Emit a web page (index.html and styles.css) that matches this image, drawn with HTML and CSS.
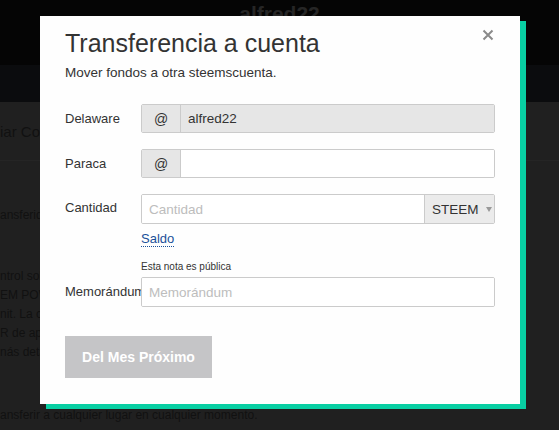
FILE: index.html
```html
<!DOCTYPE html>
<html lang="es">
<head>
    <meta charset="UTF-8">
    <meta name="viewport" content="width=device-width, initial-scale=1.0">
    <title>Transferencia a cuenta</title>
    <link rel="stylesheet" href="styles.css">
</head>
<body>

    <header class="topbar">
        <div class="username">alfred22</div>
    </header>
    <div class="subbar"></div>

    <main class="wallet">
        <div class="wallet-head"><span class="clip">iar Co</span></div>
        <p class="line first clip">ansferido</p>
        <div class="para">
            <p class="line clip">ntrol sob</p>
            <p class="line clip">EM POW</p>
            <p class="line clip">nit. La c</p>
            <p class="line clip">R de apr</p>
            <p class="line clip">nás deta</p>
        </div>
        <p class="line last">ansferir a cualquier lugar en cualquier momento.</p>
    </main>

    <div class="modal">
        <button class="close" type="button" aria-label="Cerrar">
            <svg width="12" height="12" viewBox="0 0 12 12">
                <path d="M1.5 1.5 L10.5 10.5 M10.5 1.5 L1.5 10.5" stroke="#8a8a8a" stroke-width="2" fill="none"/>
            </svg>
        </button>
        <h1>Transferencia a cuenta</h1>
        <p class="subtitle">Mover fondos a otra steemscuenta.</p>

        <form class="transfer-form">
            <div class="row">
                <label>Delaware</label>
                <div class="field">
                    <span class="addon">@</span>
                    <input type="text" value="alfred22" disabled>
                </div>
            </div>
            <div class="row">
                <label>Paraca</label>
                <div class="field">
                    <span class="addon">@</span>
                    <input type="text">
                </div>
            </div>
            <div class="row amount">
                <label>Cantidad</label>
                <div class="stack">
                    <div class="field tall">
                        <input type="text" placeholder="Cantidad">
                        <span class="asset">STEEM <span class="caret"></span></span>
                    </div>
                    <a href="#" class="balance">Saldo</a>
                </div>
            </div>
            <div class="row memo">
                <label><span class="memo-label">Memorándum</span></label>
                <div class="stack">
                    <small class="hint">Esta nota es pública</small>
                    <div class="field tall">
                        <input type="text" placeholder="Memorándum">
                    </div>
                </div>
            </div>
            <button type="submit" class="submit" disabled>Del Mes Próximo</button>
        </form>
    </div>

</body>
</html>
```

FILE: styles.css
```css
body {
    font-family: "Liberation Sans", Arial, sans-serif;
    background-color: #202020;
    color: #333;
    margin: 0;
    padding: 0;
    height: 430px;
    overflow: hidden;
}

.topbar {
    background-color: #050505;
    height: 65px;
    text-align: center;
}

.username {
    font-size: 21px;
    font-weight: bold;
    color: #262626;
    padding-top: 2px;
}

.subbar {
    background-color: #0b0c0e;
    height: 37px;
}

.wallet {
    color: #111;
}

.clip {
    display: block;
    width: 40px;
    overflow: hidden;
    white-space: nowrap;
}

.wallet-head {
    font-size: 15px;
    padding: 21px 0 20px;
    border-bottom: 1px solid #252525;
}

.line {
    margin: 0;
    font-size: 12px;
    line-height: 19px;
    white-space: nowrap;
}

.line.first {
    margin-top: 45px;
}

.para {
    margin-top: 42px;
}

.line.last {
    margin-top: 44px;
}

.modal {
    position: absolute;
    left: 40px;
    top: 16px;
    width: 480px;
    height: 388px;
    box-sizing: border-box;
    background: #fefefe;
    box-shadow: 6px 5px 0 #08cfa3;
    padding: 12px 25px 0;
}

.close {
    position: absolute;
    right: 26px;
    top: 13px;
    background: none;
    border: none;
    padding: 0;
    cursor: pointer;
}

.modal h1 {
    font-size: 25px;
    font-weight: normal;
    line-height: 30px;
    margin: 0;
    color: #333;
}

.subtitle {
    font-size: 13.5px;
    line-height: 20px;
    margin: 5px 0 0;
}

.transfer-form {
    margin-top: 21px;
}

.row {
    display: flex;
    align-items: center;
    margin-bottom: 16px;
}

.row label {
    width: 76px;
    flex: none;
    font-size: 13px;
    white-space: nowrap;
}

.row.amount,
.row.memo {
    align-items: flex-start;
}

.row.amount label {
    padding-top: 6px;
}

.row.memo label {
    padding-top: 23px;
}

.memo-label {
    display: block;
    width: 76px;
    overflow: hidden;
}

.stack {
    flex: 1;
    display: flex;
    flex-direction: column;
}

.field {
    flex: 1;
    display: flex;
    height: 29px;
    box-sizing: border-box;
    border: 1px solid #cbcbcb;
    border-radius: 2px;
    background: #fff;
    overflow: hidden;
}

.stack .field {
    flex: none;
}

.field.tall {
    height: 30px;
}

.addon {
    width: 38px;
    flex: none;
    display: flex;
    align-items: center;
    justify-content: center;
    background: #e6e6e6;
    border-right: 1px solid #cbcbcb;
    font-size: 14px;
}

.field input {
    flex: 1;
    min-width: 0;
    border: none;
    outline: none;
    padding: 0 7px;
    font-family: inherit;
    font-size: 13.5px;
    color: #333;
    background: #fff;
}

.field input:disabled {
    background: #e6e6e6;
    color: #333;
}

.field input::placeholder {
    color: #bdbdbd;
}

.asset {
    flex: none;
    width: 70px;
    box-sizing: border-box;
    display: flex;
    align-items: center;
    padding-left: 7px;
    gap: 7px;
    background: #ebebeb;
    border-left: 1px solid #cbcbcb;
    font-size: 13.5px;
}

.caret {
    width: 0;
    height: 0;
    border-left: 3.5px solid transparent;
    border-right: 3.5px solid transparent;
    border-top: 5px solid #999;
}

.balance {
    align-self: flex-start;
    margin-top: 7px;
    font-size: 13px;
    color: #1a5099;
    text-decoration: none;
    border-bottom: 1px dotted #1a5099;
    line-height: 15px;
}

.row.amount {
    margin-bottom: 14px;
}

.hint {
    font-size: 10px;
    line-height: 12px;
    margin-bottom: 4px;
    color: #333;
}

.submit {
    margin-top: 13px;
    width: 147px;
    height: 42px;
    border: none;
    background-color: #c5c5c7;
    color: #fff;
    font-family: inherit;
    font-size: 14px;
    font-weight: bold;
}
```
